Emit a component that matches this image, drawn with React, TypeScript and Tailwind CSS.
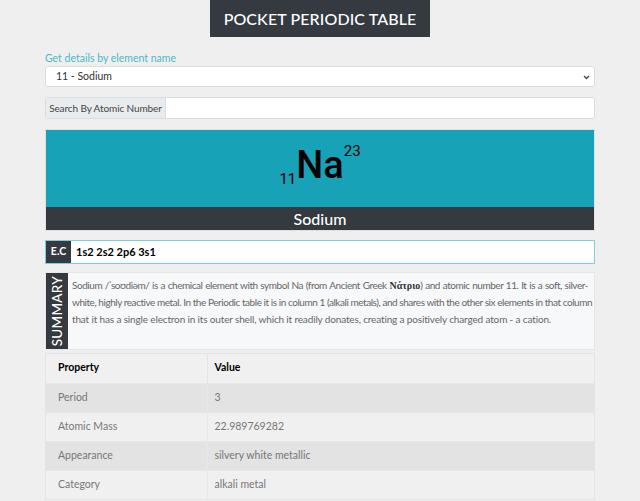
import React from "react";

const font = { fontFamily: "Lato, 'Noto Sans', sans-serif" };

export default function App() {
  const rows: [string, string][] = [
    ["Period", "3"],
    ["Atomic Mass", "22.989769282"],
    ["Appearance", "silvery white metallic"],
    ["Category", "alkali metal"],
  ];
  return (
    <div className="min-h-[501px] w-[640px] bg-[#efefef]" style={font}>
      <div className="flex justify-center">
        <div className="flex h-[37px] w-[220px] items-center justify-center bg-[#343a40] text-[16px] font-medium tracking-[0.1px] text-white">
          POCKET PERIODIC TABLE
        </div>
      </div>
      <div className="mx-[45px] w-[550px]">
        <div className="mt-[14px] text-[10.5px] leading-[14px] text-[#4bb8c9]">Get details by element name</div>
        <div className="relative mt-[1px] flex h-[21px] items-center rounded-[3px] border border-[#dcdcdc] bg-white pl-[10px] text-[10.5px] text-[#333]">
          11 - Sodium
          <svg className="absolute right-[4px] top-[8px]" width="7" height="5" viewBox="0 0 7 5">
            <path d="M1 1l2.5 2.5L6 1" fill="none" stroke="#444" strokeWidth="1.3" />
          </svg>
        </div>
        <div className="mt-[10px] flex h-[22px] rounded-[3px] border border-[#dcdcdc] bg-white">
          <div className="flex w-[120px] items-center justify-center whitespace-nowrap border-r border-[#dcdcdc] bg-[#e9ecef] text-[10px] tracking-[-0.1px] text-[#444]">
            Search By Atomic Number
          </div>
          <div className="flex-1" />
        </div>
        <div className="mt-[10px] border border-[#e0e0e0]">
          <div className="flex h-[77px] items-start justify-center bg-[#17a2b8] pt-[14px]" style={{ fontFamily: "Roboto, sans-serif" }}>
            <div className="flex items-start text-black">
              <span className="mt-[26px] text-[15px] leading-[18px]">11</span>
              <span className="text-[38px] leading-[42px] font-medium">Na</span>
              <span className="mt-[-2px] text-[15px] leading-[18px]">23</span>
            </div>
          </div>
          <div className="flex h-[23px] items-center justify-center bg-[#343a40] text-[16px] font-medium text-white">
            Sodium
          </div>
        </div>
        <div className="mt-[9px] flex h-[24px] border border-[#7ccfdc] bg-white">
          <div className="flex w-[25px] items-center justify-center bg-[#343a40] text-[10.5px] font-bold text-white">E.C</div>
          <div className="flex items-center pl-[5px] text-[11px] font-bold text-black">1s2 2s2 2p6 3s1</div>
        </div>
        <div className="mt-[8px] flex h-[78px] border border-[#e6e6e6] bg-[#f7f8f9]">
          <div className="flex w-[22px] items-center justify-center bg-[#343a40]">
            <span className="-rotate-90 whitespace-nowrap text-[13.5px] font-medium tracking-[0.3px] text-white">SUMMARY</span>
          </div>
          <div className="min-w-0 flex-1 whitespace-nowrap pl-[4px] pr-[6px] pt-[4px] text-[10px] leading-[17px] tracking-[-0.45px] text-[#666]">
            <div className="text-justify [text-align-last:justify]">
              Sodium /ˈsoʊdiəm/ is a chemical element with symbol Na (from Ancient Greek{" "}
              <span className="font-bold tracking-normal text-[#333]" style={{ fontFamily: "'Liberation Serif', serif" }}>Νάτριο</span>) and atomic number 11. It is a soft, silver-
            </div>
            <div className="text-justify [text-align-last:justify]">
              white, highly reactive metal. In the Periodic table it is in column 1 (alkali metals), and shares with the other six elements in that column
            </div>
            <div className="tracking-[-0.15px]">
              that it has a single electron in its outer shell, which it readily donates, creating a positively charged atom - a cation.
            </div>
          </div>
        </div>
        <div className="mt-[3px] border border-[#e4e4e4]">
          <table className="w-full border-collapse text-[10.5px]">
            <thead>
              <tr className="h-[29px] bg-[#f0f0f0]">
                <th className="w-[161px] border-r border-[#e4e4e4] pl-[12px] text-left font-bold text-black">Property</th>
                <th className="pl-[7px] text-left font-bold text-black">Value</th>
              </tr>
            </thead>
            <tbody>
              {rows.map(([k, v], i) => (
                <tr key={k} className={`h-[29px] border-t border-[#e6e6e6] ${i % 2 === 0 ? "bg-[#e3e3e3]" : "bg-[#f0f0f0]"}`}>
                  <td className="border-r border-[#e8e8e8] pl-[12px] text-[#777]">{k}</td>
                  <td className="pl-[7px] text-[#777]">{v}</td>
                </tr>
              ))}
            </tbody>
          </table>
        </div>
      </div>
    </div>
  );
}
